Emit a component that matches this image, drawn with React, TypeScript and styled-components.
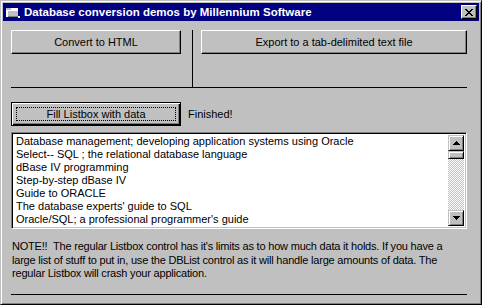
import React, { FC } from 'react';
import styled, { createGlobalStyle } from 'styled-components';

const GlobalStyle = createGlobalStyle`
  html, body {
    margin: 0;
    padding: 0;
    background: #c0c0c0;
  }
  body {
    font-family: 'Liberation Sans', Arial, sans-serif;
    font-size: 11px;
    color: #000;
  }
`;

const Window = styled.div`
  width: 482px;
  height: 305px;
  box-sizing: border-box;
  background: #c0c0c0;
  border-top: 1px solid #c0c0c0;
  border-left: 1px solid #c0c0c0;
  border-right: 1px solid #000;
  border-bottom: 1px solid #000;
  box-shadow: inset 1px 1px 0 #fff, inset -1px -1px 0 #808080;
  padding: 2px;
  display: flex;
  flex-direction: column;
`;

const TitleBar = styled.div`
  height: 18px;
  background: #000080;
  display: flex;
  align-items: center;
  padding: 0 2px 0 2px;
  gap: 3px;
`;

const Title = styled.div`
  flex: 1;
  color: #fff;
  font-weight: bold;
  font-size: 11.5px;
  white-space: nowrap;
`;

const CloseButton = styled.div`
  width: 16px;
  height: 14px;
  box-sizing: border-box;
  background: #c0c0c0;
  border-top: 1px solid #fff;
  border-left: 1px solid #fff;
  border-right: 1px solid #000;
  border-bottom: 1px solid #000;
  box-shadow: inset -1px -1px 0 #808080;
  display: flex;
  align-items: center;
  justify-content: center;
`;

const Body = styled.div`
  flex: 1;
  padding: 9px 12px 0 8px;
  display: flex;
  flex-direction: column;
`;

const TopArea = styled.div`
  display: flex;
  height: 57px;
`;

const LeftCol = styled.div`
  width: 184px;
`;

const RightCol = styled.div`
  flex: 1;
  padding-left: 8px;
`;

const VLine = styled.div`
  width: 1px;
  background: #000;
`;

const HLine = styled.div<{ top?: number }>`
  height: 1px;
  background: #000;
  margin-top: ${({ top }) => top ?? 0}px;
`;

const Button = styled.div<{ width: number; isDefault?: boolean }>`
  width: ${({ width }) => width}px;
  height: 24px;
  box-sizing: border-box;
  background: #c0c0c0;
  display: flex;
  align-items: center;
  justify-content: center;
  border: 1px solid;
  border-color: ${({ isDefault }) =>
    isDefault ? '#000' : '#fff #000 #000 #fff'};
  box-shadow: ${({ isDefault }) =>
    isDefault
      ? 'inset 1px 1px 0 #fff, inset -1px -1px 0 #000, inset -2px -2px 0 #808080'
      : 'inset -1px -1px 0 #808080'};
  position: relative;
`;

const FocusRing = styled.div`
  position: absolute;
  inset: 4px;
  border: 1px dotted #000;
`;

const FillRow = styled.div`
  display: flex;
  align-items: center;
  gap: 7px;
  margin-top: 14px;
`;

const ListBox = styled.div`
  margin-top: 6px;
  height: 97px;
  box-sizing: border-box;
  border-top: 1px solid #808080;
  border-left: 1px solid #808080;
  border-right: 1px solid #fff;
  border-bottom: 1px solid #fff;
  box-shadow: inset 1px 1px 0 #000, inset -1px -1px 0 #c0c0c0;
  padding: 2px;
  display: flex;
  background: #fff;
`;

const Items = styled.div`
  flex: 1;
  padding-left: 2px;
  overflow: hidden;
`;

const Item = styled.div`
  height: 13px;
  line-height: 13px;
  white-space: nowrap;
`;

const ScrollBar = styled.div`
  width: 16px;
  display: flex;
  flex-direction: column;
  background-image: conic-gradient(#fff 25%, #c0c0c0 0 50%, #fff 0 75%, #c0c0c0 0);
  background-size: 2px 2px;
`;

const ScrollPart = styled.div<{ h: number }>`
  height: ${({ h }) => h}px;
  box-sizing: border-box;
  background: #c0c0c0;
  border-top: 1px solid #c0c0c0;
  border-left: 1px solid #c0c0c0;
  border-right: 1px solid #000;
  border-bottom: 1px solid #000;
  box-shadow: inset 1px 1px 0 #fff, inset -1px -1px 0 #808080;
  display: flex;
  align-items: center;
  justify-content: center;
`;

const Track = styled.div`
  flex: 1;
`;

const Note = styled.div`
  margin-top: 11px;
  line-height: 13.5px;
  letter-spacing: -0.2px;
  white-space: pre;
  padding-left: 1px;
`;

const items = [
  'Database management; developing application systems using Oracle',
  'Select-- SQL ; the relational database language',
  'dBase IV programming',
  'Step-by-step dBase IV',
  'Guide to ORACLE',
  "The database experts' guide to SQL",
  "Oracle/SQL; a professional programmer's guide",
];

const Arrow: FC<{ down?: boolean }> = ({ down }) => (
  <svg width="7" height="4" viewBox="0 0 7 4" shapeRendering="crispEdges">
    <path
      d={down ? 'M0 0h7v1H6v1H5v1H4v1H3V3H2V2H1V1H0z' : 'M3 0h1v1h1v1h1v1h1v1H0V3h1V2h1V1h1z'}
      fill="#000"
    />
  </svg>
);

const App: FC = () => (
  <>
    <GlobalStyle />
    <Window>
      <TitleBar>
        <svg width="16" height="14" viewBox="0 0 16 14" shapeRendering="crispEdges">
          <rect x="1" y="3" width="12" height="9" fill="#fff" />
          <rect x="1" y="3" width="5" height="2" fill="#c0c0c0" />
          <rect x="3" y="6" width="10" height="6" fill="#c0c0c0" />
          <rect x="3" y="11" width="10" height="1" fill="#808080" />
          <rect x="13" y="11" width="2" height="2" fill="#fff" />
        </svg>
        <Title>Database conversion demos by Millennium Software</Title>
        <CloseButton>
          <svg width="8" height="7" viewBox="0 0 8 7" shapeRendering="crispEdges">
            <path
              d="M0 0h2v1h1v1h2V1h1V0h2v1H7v1H6v1H5v1h1v1h1v1h1v1H6V6H5V5H3v1H2v1H0V6h1V5h1V4h1V3H2V2H1V1H0z"
              fill="#000"
            />
          </svg>
        </CloseButton>
      </TitleBar>
      <Body>
        <TopArea>
          <LeftCol>
            <Button width={170}>Convert to HTML</Button>
          </LeftCol>
          <VLine />
          <RightCol>
            <Button width={266}>Export to a tab-delimited text file</Button>
          </RightCol>
        </TopArea>
        <HLine />
        <FillRow>
          <Button width={170} isDefault>
            <FocusRing />
            Fill Listbox with data
          </Button>
          <span>Finished!</span>
        </FillRow>
        <ListBox>
          <Items>
            {items.map((text) => (
              <Item key={text}>{text}</Item>
            ))}
          </Items>
          <ScrollBar>
            <ScrollPart h={16}>
              <Arrow />
            </ScrollPart>
            <ScrollPart h={8} />
            <Track />
            <ScrollPart h={16}>
              <Arrow down />
            </ScrollPart>
          </ScrollBar>
        </ListBox>
        <Note>
          {"NOTE!!  The regular Listbox control has it's limits as to how much data it holds. If you have a\n"}
          {'large list of stuff to put in, use the DBList control as it will handle large amounts of data. The\n'}
          {'regular Listbox will crash your application.'}
        </Note>
        <HLine top={13} />
      </Body>
    </Window>
  </>
);

export default App;
